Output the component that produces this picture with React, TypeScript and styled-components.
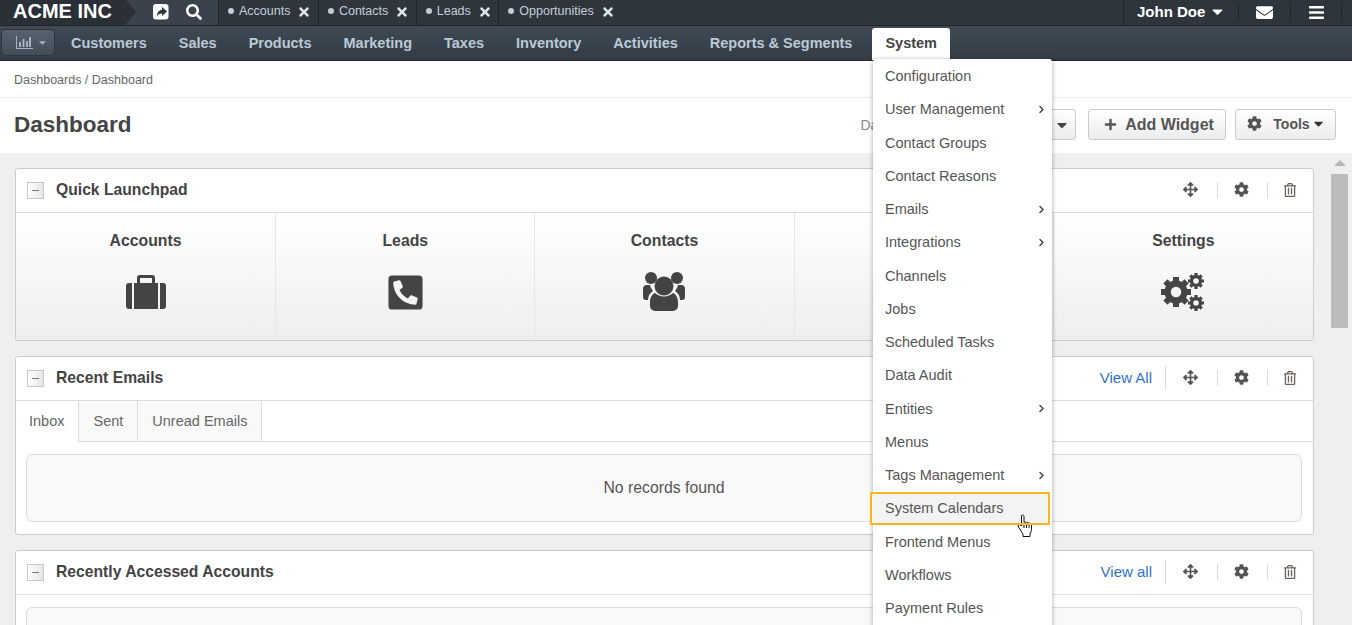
import styled, { createGlobalStyle } from "styled-components"
import {
  FaSearch,
  FaTimes,
  FaCaretDown,
  FaEnvelope,
  FaBars,
  FaPlus,
  FaCog,
  FaArrowsAlt,
  FaRegTrashAlt,
  FaPhoneSquareAlt,
  FaChevronRight,
} from "react-icons/fa"

const GlobalStyle = createGlobalStyle`
  html, body {
    margin: 0;
    padding: 0;
    background: #efefef;
    font-family: "Liberation Sans", Arial, sans-serif;
    color: #444;
  }
`

const Page = styled.div`
  position: relative;
  width: 1352px;
  height: 625px;
  overflow: hidden;
  display: flex;
  flex-direction: column;
`

const TopBar = styled.div`
  height: 26px;
  flex: none;
  display: flex;
  background: #2f353d;
  border-bottom: 1px solid #1f2429;
  box-sizing: border-box;
`

const Brand = styled.div`
  position: relative;
  width: 126px;
  padding-left: 13px;
  box-sizing: border-box;
  font-size: 20px;
  font-weight: bold;
  line-height: 23px;
  color: #fff;
  background: #2b3037;
  white-space: nowrap;

  &::after {
    content: "";
    position: absolute;
    left: 126px;
    top: 0;
    border-left: 10px solid #2b3037;
    border-top: 12.5px solid transparent;
    border-bottom: 12.5px solid transparent;
  }
`

const QuickIcons = styled.div`
  width: 92px;
  padding: 0 0 2px 27px;
  box-sizing: border-box;
  display: flex;
  align-items: center;
  gap: 17px;
  color: #fff;
  font-size: 16px;
  background: #3a434d;
`

const OpenTab = styled.div`
  display: flex;
  align-items: center;
  height: 25px;
  padding: 0 6.5px 3px 9px;
  box-sizing: border-box;
  gap: 5px;
  font-size: 12.5px;
  color: #c4ced8;
  border-left: 1px solid #1f2429;
  white-space: nowrap;

  &:last-of-type {
    border-right: 1px solid #1f2429;
  }
`

const Dot = styled.span`
  width: 6px;
  height: 6px;
  border-radius: 50%;
  background: #c4ced8;
`

const CloseIcon = styled(FaTimes)`
  font-size: 14px;
  color: #dfe4ea;
  margin: 2px 0 0 2px;
`

const TopRight = styled.div`
  margin-left: auto;
  display: flex;
  align-items: flex-start;
  height: 25px;
  padding-right: 10px;
  color: #fff;
`

const UserCell = styled.div`
  width: 115px;
  height: 25px;
  box-sizing: border-box;
  padding: 0 0 3px 13px;
  display: flex;
  align-items: center;
  gap: 4px;
  font-size: 15px;
  font-weight: bold;
  border-left: 1px solid #1f2429;

  svg {
    font-size: 17px;
  }
`

const TopIconCell = styled.div`
  width: 52px;
  height: 18px;
  margin-top: 3px;
  box-sizing: border-box;
  display: flex;
  align-items: center;
  justify-content: center;
  font-size: 17px;
  border-left: 1px solid #1f2429;

  &:last-child {
    border-right: 1px solid #1f2429;
  }
`

const NavBar = styled.div`
  height: 35px;
  flex: none;
  box-sizing: border-box;
  padding-left: 1px;
  display: flex;
  align-items: flex-end;
  background: linear-gradient(#3f4a55, #333c45);
  border-bottom: 1px solid #1f2429;
`

const ChartButton = styled.div`
  width: 54px;
  height: 27px;
  margin-bottom: 4px;
  padding-left: 14px;
  box-sizing: border-box;
  display: flex;
  align-items: center;
  gap: 4px;
  color: #a4b4c4;
  border-radius: 4px;
  border: 1px solid #2c343c;
  background: linear-gradient(#56626e, #424d58);
`

const SmallCaret = styled(FaCaretDown)`
  font-size: 11px;
`

const NavItem = styled.div<{ $active?: boolean }>`
  height: ${(p) => (p.$active ? "32px" : "34px")};
  line-height: ${(p) => (p.$active ? "30px" : "34px")};
  padding: 0 ${(p) => (p.$active ? "13px" : "16px")};
  margin-left: ${(p) => (p.$active ? "4px" : "0")};
  font-size: 14.5px;
  font-weight: bold;
  white-space: nowrap;
  color: ${(p) => (p.$active ? "#444" : "#bcc9d6")};
  background: ${(p) => (p.$active ? "#fff" : "transparent")};
  border-radius: ${(p) => (p.$active ? "3px 3px 0 0" : "0")};
`

const Breadcrumb = styled.div`
  height: 37px;
  flex: none;
  box-sizing: border-box;
  padding: 0 14px;
  font-size: 12.5px;
  line-height: 38px;
  color: #666;
  background: #fff;
  border-bottom: 1px solid #eee;
`

const TitleRow = styled.div`
  height: 55px;
  flex: none;
  box-sizing: border-box;
  padding: 0 16px 2px 14px;
  display: flex;
  align-items: center;
  background: #fff;
`

const PageTitle = styled.h1`
  margin: 0;
  font-size: 22.5px;
  font-weight: bold;
  color: #444;
`

const Actions = styled.div`
  margin-left: auto;
  display: flex;
  align-items: center;
  gap: 9px;
`

const ActionLabel = styled.span`
  font-size: 14px;
  color: #888;
  margin-right: 3px;
`

const ActionButton = styled.div<{ $w: number; $fs?: number }>`
  width: ${(p) => p.$w}px;
  height: 31px;
  box-sizing: border-box;
  display: flex;
  align-items: center;
  justify-content: center;
  gap: 8px;
  font-size: ${(p) => p.$fs ?? 16}px;
  font-weight: bold;
  color: #555;
  border: 1px solid #ccc;
  border-radius: 3px;
  background: linear-gradient(#fff, #ececec);
`

const SelectButton = styled(ActionButton)`
  justify-content: flex-end;
  padding-right: 5px;
  margin-right: 3px;
  color: #444;
`

const AddButton = styled(ActionButton)`
  padding-left: 4px;
`

const ToolsButton = styled(ActionButton)`
  padding: 0 0 2px 2px;
`

const ToolsCog = styled(FaCog)`
  font-size: 15px;
  margin-right: 3px;
`

const ToolsCaret = styled(FaCaretDown)`
  font-size: 15px;
  margin-left: -7px;
  color: #333;
`

const Body = styled.div`
  flex: 1;
  min-height: 0;
  display: flex;
  overflow: hidden;
`

const Content = styled.div`
  width: 1331px;
  box-sizing: border-box;
  padding: 15px 17px 0 15px;
  display: flex;
  flex-direction: column;
  gap: 15px;
`

const ScrollTrack = styled.div`
  width: 17px;
  padding-top: 7px;
  display: flex;
  flex-direction: column;
  align-items: center;
`

const ScrollArrow = styled.div`
  border-left: 6px solid transparent;
  border-right: 6px solid transparent;
  border-bottom: 6px solid #b5b5b5;
`

const ScrollThumb = styled.div`
  width: 17px;
  height: 154px;
  margin-top: 8px;
  background: #bcbcbc;
`

const Widget = styled.section`
  flex: none;
  background: #fff;
  border: 1px solid #ccc;
  border-radius: 3px;
`

const WidgetHead = styled.header`
  height: 44px;
  box-sizing: border-box;
  padding: 0 0 2px 11px;
  display: flex;
  align-items: center;
  border-bottom: 1px solid #ddd;
`

const Collapse = styled.span`
  width: 17px;
  height: 17px;
  box-sizing: border-box;
  margin: 2px 12px 0 0;
  display: flex;
  align-items: center;
  justify-content: center;
  border: 1px solid #c6c6c6;
  background: linear-gradient(90deg, #fff, #e6e6e6);

  &::before {
    content: "";
    width: 7px;
    height: 1px;
    background: #777;
  }
`

const WidgetTitle = styled.h2`
  margin: 0;
  font-size: 15.7px;
  font-weight: bold;
  color: #444;
`

const WidgetTools = styled.div`
  margin-left: auto;
  display: flex;
  align-items: center;
  color: #555;
`

const ViewLink = styled.a`
  font-size: 15px;
  color: #2f74c6;
  padding-right: 13px;
  line-height: 24px;
  border-right: 1px solid #ddd;
`

const ToolIcon = styled.span<{ $w: number; $line?: boolean }>`
  width: ${(p) => p.$w}px;
  height: 16px;
  box-sizing: border-box;
  padding-right: 2px;
  display: flex;
  align-items: center;
  justify-content: center;
  font-size: 15px;
  border-left: ${(p) => (p.$line ? "1px solid #ddd" : "none")};
`

const TrashIcon = styled(FaRegTrashAlt)`
  font-size: 14px;
  color: #6b625c;
`

const LaunchGrid = styled.div`
  display: grid;
  grid-template-columns: repeat(4, 259.2px) 1fr;
  height: 127px;
  background: linear-gradient(#fff, #eee);
  border-radius: 0 0 3px 3px;
`

const LaunchCell = styled.div`
  display: flex;
  flex-direction: column;
  align-items: center;
  padding-top: 19px;
  font-size: 15.8px;
  font-weight: bold;
  color: #444;
  border-left: 1px solid #e6e6e6;

  &:first-child {
    border-left: none;
  }
`

const LaunchIcon = styled.div`
  height: 42px;
  margin-top: 21px;
  display: flex;
  align-items: center;
  justify-content: center;
  font-size: 39px;
  color: #444;
`

const TabRow = styled.div`
  height: 41px;
  display: flex;
  box-sizing: border-box;
  border-bottom: 1px solid #ddd;
`

const Tab = styled.div<{ $active?: boolean }>`
  height: ${(p) => (p.$active ? "41px" : "40px")};
  box-sizing: border-box;
  padding: 0 14px;
  line-height: 40px;
  font-size: 14.5px;
  color: #666;
  border-right: 1px solid #ddd;
  background: ${(p) => (p.$active ? "#fff" : "#f9f9f9")};

  &:first-child {
    padding-left: 13px;
  }
`

const EmptyBox = styled.div`
  margin: 12px 11px 12px 10px;
  height: 68px;
  box-sizing: border-box;
  display: flex;
  align-items: center;
  justify-content: center;
  font-size: 15.8px;
  color: #555;
  background: #f9f9f9;
  border: 1px solid #ddd;
  border-radius: 6px;
`

const Menu = styled.div`
  position: absolute;
  left: 873px;
  top: 59px;
  width: 179px;
  height: 580px;
  padding-top: 0.6px;
  box-sizing: border-box;
  background: #fff;
  border-radius: 3px;
  box-shadow: 0 1px 5px rgba(0, 0, 0, 0.35);
`

const MenuRow = styled.div`
  position: relative;
  height: 33.25px;
  box-sizing: border-box;
  padding-left: 12px;
  font-size: 14.5px;
  color: #555;
  white-space: nowrap;
  display: flex;
  align-items: center;
`

// the yellow frame lies over the hand cursor in the reference
const HoverRow = styled(MenuRow)`
  margin: 0 2px 0 -3px;
  padding-left: 15px;
  background: #f3f3f3;

  &::after {
    content: "";
    position: absolute;
    inset: 0;
    box-sizing: border-box;
    border: 2px solid #f5b91f;
  }
`

const MenuChevron = styled(FaChevronRight)`
  position: absolute;
  right: 6px;
  top: 12px;
  font-size: 9px;
  color: #444;
`

const HandCursor = styled.svg`
  position: absolute;
  left: 147px;
  top: 22px;
`

function Gear({ cx, cy, r }: { cx: number; cy: number; r: number }) {
  const teeth = [0, 45, 90, 135]
  return (
    <g stroke="#444" fill="none">
      <circle cx={cx} cy={cy} r={r * 0.56} strokeWidth={r * 0.42} />
      {teeth.map((a) => (
        <line
          key={a}
          x1={cx - r}
          y1={cy}
          x2={cx + r}
          y2={cy}
          strokeWidth={r * 0.4}
          strokeDasharray={`${r * 0.34} ${r * 1.32} ${r * 0.34}`}
          transform={`rotate(${a} ${cx} ${cy})`}
        />
      ))}
    </g>
  )
}

function Cogs() {
  return (
    <svg width="46" height="42" viewBox="0 0 46 42">
      <Gear cx={16} cy={21} r={15} />
      <Gear cx={36} cy={10} r={8} />
      <Gear cx={36} cy={32} r={8} />
    </svg>
  )
}

function Briefcase() {
  return (
    <svg width="40" height="34" viewBox="0 0 40 34">
      <path
        fill="#444"
        fillRule="evenodd"
        d="M0 11a3 3 0 0 1 3-3h3v26H3a3 3 0 0 1-3-3zM8 8h3V3a3 3 0 0 1 3-3h12a3 3 0 0 1 3 3v5h3v26H8zM14 8h12V3H14zM34 8h3a3 3 0 0 1 3 3v20a3 3 0 0 1-3 3h-3z"
      />
    </svg>
  )
}

function People() {
  return (
    <svg width="44" height="40" viewBox="0 0 44 40">
      <g fill="#444">
        <circle cx="9" cy="6" r="6" />
        <circle cx="35" cy="6" r="6" />
        <path d="M1 17a4 4 0 0 1 4-4h3a12 12 0 0 0 3 6c-3 2-5 5-5 9H4a3 3 0 0 1-3-3z" />
        <path d="M43 17a4 4 0 0 0-4-4h-3a12 12 0 0 1-3 6c3 2 5 5 5 9h2a3 3 0 0 0 3-3z" />
        <circle cx="22" cy="14" r="9.500" />
        <path d="M8 30c0-4 2-8 5-9 2.500 2 5.500 3.500 9 3.500s6.500-1.500 9-3.500c3 1 5 5 5 9v4a5 5 0 0 1-5 5H13a5 5 0 0 1-5-5z" />
      </g>
    </svg>
  )
}

function ChartGlyph() {
  return (
    <svg width="17" height="13" viewBox="0 0 17 13">
      <path
        fill="currentColor"
        d="M0 0h1v12h16v1H0zM3 6h2v5H3zM6.500 3h2v8h-2zM10 5h2v6h-2zM13 1h2v10h-2z"
      />
    </svg>
  )
}

function ShareGlyph() {
  return (
    <svg width="16" height="16" viewBox="0 0 16 16">
      <rect width="15.500" height="15.500" x="0" y="0" rx="3" fill="#fff" />
      <path
        fill="#2f353d"
        d="M9 3l5 4.500-5 4.500V9.500c-2.500 0-4 .7-5 3 0-4 1.800-6.500 5-6.800z"
      />
    </svg>
  )
}

const openTabs = ["Accounts", "Contacts", "Leads", "Opportunities"]

const navItems = [
  "Customers",
  "Sales",
  "Products",
  "Marketing",
  "Taxes",
  "Inventory",
  "Activities",
  "Reports & Segments",
]

const menuItems = [
  { label: "Configuration" },
  { label: "User Management", sub: true },
  { label: "Contact Groups" },
  { label: "Contact Reasons" },
  { label: "Emails", sub: true },
  { label: "Integrations", sub: true },
  { label: "Channels" },
  { label: "Jobs" },
  { label: "Scheduled Tasks" },
  { label: "Data Audit" },
  { label: "Entities", sub: true },
  { label: "Menus" },
  { label: "Tags Management", sub: true },
  { label: "System Calendars", hover: true },
  { label: "Frontend Menus" },
  { label: "Workflows" },
  { label: "Payment Rules" },
]

function Tools({ link }: { link?: string }) {
  return (
    <WidgetTools>
      {link && <ViewLink>{link}</ViewLink>}
      <ToolIcon $w={51}>
        <FaArrowsAlt />
      </ToolIcon>
      <ToolIcon $w={50} $line>
        <FaCog />
      </ToolIcon>
      <ToolIcon $w={46} $line>
        <TrashIcon />
      </ToolIcon>
    </WidgetTools>
  )
}

export default function App() {
  return (
    <Page>
      <GlobalStyle />
      <TopBar>
        <Brand>ACME INC</Brand>
        <QuickIcons>
          <ShareGlyph />
          <FaSearch />
        </QuickIcons>
        {openTabs.map((tab) => (
          <OpenTab key={tab}>
            <Dot />
            {tab}
            <CloseIcon />
          </OpenTab>
        ))}
        <TopRight>
          <UserCell>
            John Doe
            <FaCaretDown />
          </UserCell>
          <TopIconCell>
            <FaEnvelope />
          </TopIconCell>
          <TopIconCell>
            <FaBars />
          </TopIconCell>
        </TopRight>
      </TopBar>

      <NavBar>
        <ChartButton>
          <ChartGlyph />
          <SmallCaret />
        </ChartButton>
        {navItems.map((item) => (
          <NavItem key={item}>{item}</NavItem>
        ))}
        <NavItem $active>System</NavItem>
      </NavBar>

      <Breadcrumb>Dashboards / Dashboard</Breadcrumb>

      <TitleRow>
        <PageTitle>Dashboard</PageTitle>
        <Actions>
          <ActionLabel>Dashboards</ActionLabel>
          <SelectButton $w={128}>
            <FaCaretDown />
          </SelectButton>
          <AddButton $w={138}>
            <FaPlus size={13} />
            Add Widget
          </AddButton>
          <ToolsButton $w={101} $fs={14}>
            <ToolsCog />
            Tools
            <ToolsCaret />
          </ToolsButton>
        </Actions>
      </TitleRow>

      <Body>
        <Content>
          <Widget>
            <WidgetHead>
              <Collapse />
              <WidgetTitle>Quick Launchpad</WidgetTitle>
              <Tools />
            </WidgetHead>
            <LaunchGrid>
              <LaunchCell>
                Accounts
                <LaunchIcon>
                  <Briefcase />
                </LaunchIcon>
              </LaunchCell>
              <LaunchCell>
                Leads
                <LaunchIcon>
                  <FaPhoneSquareAlt />
                </LaunchIcon>
              </LaunchCell>
              <LaunchCell>
                Contacts
                <LaunchIcon>
                  <People />
                </LaunchIcon>
              </LaunchCell>
              <LaunchCell />
              <LaunchCell>
                Settings
                <LaunchIcon>
                  <Cogs />
                </LaunchIcon>
              </LaunchCell>
            </LaunchGrid>
          </Widget>

          <Widget>
            <WidgetHead>
              <Collapse />
              <WidgetTitle>Recent Emails</WidgetTitle>
              <Tools link="View All" />
            </WidgetHead>
            <TabRow>
              <Tab $active>Inbox</Tab>
              <Tab>Sent</Tab>
              <Tab>Unread Emails</Tab>
            </TabRow>
            <EmptyBox>No records found</EmptyBox>
          </Widget>

          <Widget>
            <WidgetHead>
              <Collapse />
              <WidgetTitle>Recently Accessed Accounts</WidgetTitle>
              <Tools link="View all" />
            </WidgetHead>
            <EmptyBox />
          </Widget>
        </Content>
        <ScrollTrack>
          <ScrollArrow />
          <ScrollThumb />
        </ScrollTrack>
      </Body>

      <Menu>
        {menuItems.map((item) =>
          item.hover ? (
            <HoverRow key={item.label}>
              {item.label}
              <HandCursor width="17" height="24" viewBox="0 0 17 24">
                <path
                  fill="#fff"
                  stroke="#111"
                  d="M4.500 1.500c1-1 2.500-.5 2.500 1v6c1-.8 2-.6 2.500.3 1-.6 2-.3 2.500.6 1-.4 2.500 0 2.500 1.500v4.600c0 2-1 3-1.500 4.500v2.500H6v-2.500L1.500 13c-1-1.500.5-3 2-2l1 1z"
                />
                <path stroke="#111" d="M7 9v5M9.500 9.500v4.500M12 10v4" />
              </HandCursor>
            </HoverRow>
          ) : (
            <MenuRow key={item.label}>
              {item.label}
              {item.sub && <MenuChevron />}
            </MenuRow>
          )
        )}
      </Menu>
    </Page>
  )
}
